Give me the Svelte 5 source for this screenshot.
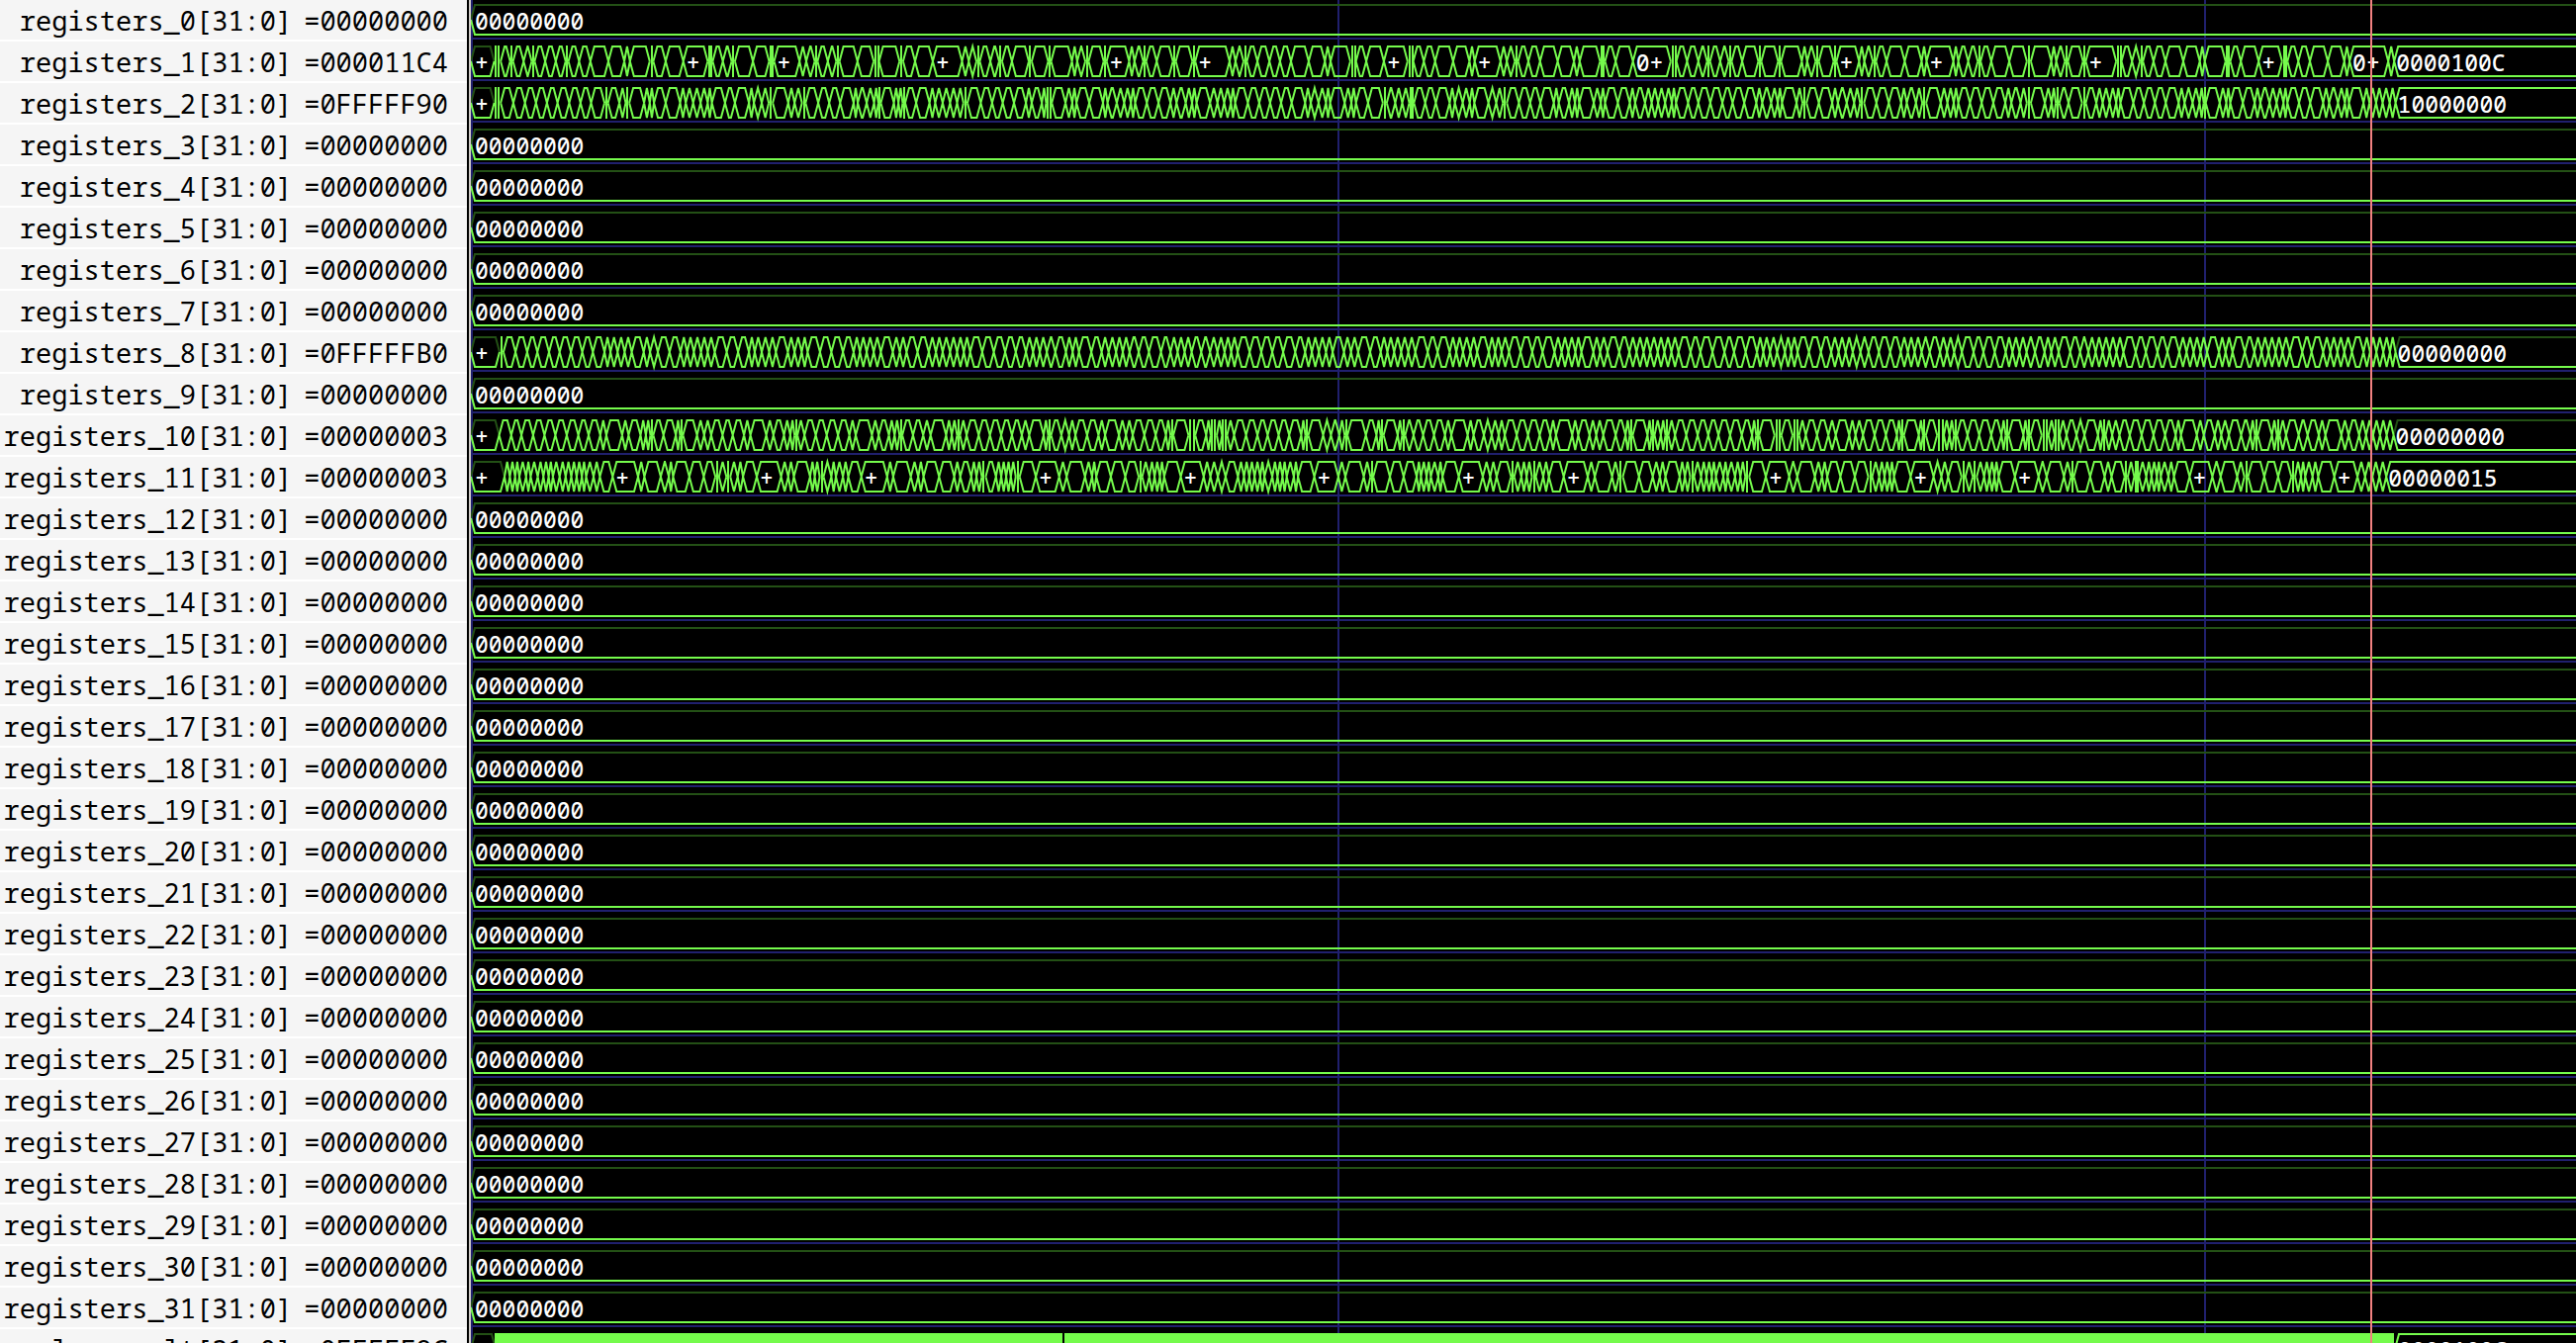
<script>
  const ORIGIN = 476;
  const TOP = 5;
  const MID = 20;
  const BOTTOM = 35;
  const FAR = 8000;

  // Each block: [start px, units per px, marks]. A positive mark is a value
  // change, a negative one is a pulse too short to draw as a cell.
  const A = 2.8;
  const B = 2.992;

  const traces = {
    1: {
      last: '0000100C',
      blocks: [
        [470, A, [-87, -97, 103, -132, 166, -193, 227, 257, -289, 323, 355, 406, 451, 467, 523, -529, 568, 618, -691, -697, 730, 755, -760, 815, 861, -865, -871, 947, 966, -994, 1027, 1051, -1056, 1111, 1157, -1162, -1168, 1230, 1240, 1274, 1324, 1407, 1426, 1448, -1453, 1487, 1512, -1516]],
        [1020, A, [8, -60, -115, 178, 193, 216, -221, -272, 340, 355, -384, 418, -468, -523, 624, 641, 664, -669, 703, 737, 767, 798, 848, 894, 910, 966, -972, -978, 1011, 1061, 1128, -1134, -1140, 1174, 1206, 1257, 1303, 1318, 1391, 1409, 1432, -1437, 1470, 1503]],
        [1570, A, [13, 59, 75, -137, -143, 177, 226, 333, -339, -345, 379, 411, -440, 473, -501, 535, -585, -641, 704, 719, 743, -748, -798, 866, 881, 905, -910, 944, 995, 1043, 1057, 1133, 1147, 1175, -1206, 1240, 1291, 1341, 1352, 1410, 1424]],
        [2080, B, [0, 22, -27, -81, 177, -183, -189, 225, 249, -254, 290, 326, 380, 430, 445, 508, -512, -518, 554, 608, 679, -685, -691, 728, 763, 817, 867, 883, 1000, 1018]]
      ]
    },
    2: {
      last: '10000000',
      blocks: [
        [470, A, [-87, -97, 103, 137, 170, 201, 232, 262, 295, 327, 357, 395, -401, 407, 437, 455, -461, 467, 507, 523, -531, 537, 568, 609, 625, 646, 667, 687, -695, 702, 736, 764, 804, 818, 840, 860, -867, 873, 915, 933, 954, -960, 966, 1000, 1031, 1062, 1100, 1112, 1137, 1158, -1166, 1177, 1214, 1227, -1235, 1246, 1277, 1315, 1331, 1352, 1373, 1393, 1411, -1418, 1426, 1460, 1492, 1522]],
        [1020, A, [14, 48, 64, 93, -101, 109, -117, 126, 160, 179, -187, 195, 227, 266, 279, 305, 326, 345, -353, 360, 390, 423, 457, 474, 500, 518, -527, 535, 569, 590, 609, 628, -636, 643, 676, 708, 739, 770, 800, 838, 854, 876, 897, -905, 912, 950, 969, -978, 985, 1016, 1058, 1069, 1093, 1113, 1133, -1142, 1148, 1178, 1208, 1247, 1262, 1284, 1304, -1313, 1321, 1357, 1379, 1398, -1405, 1413, 1443, 1475, 1504]],
        [1570, A, [2, 16, 45, 62, -70, 78, 115, 135, -143, 149, 183, 217, 232, 260, 279, 297, 317, 336, -344, 350, 382, 411, 445, 479, 508, 541, 575, 592, 617, 636, -644, 652, 689, 706, -713, 720, 752, 790, 806, 831, 852, 869, -876, 883, 915, 950, 985, 1001, 1027, 1045, -1052, 1060, 1097, 1116, 1134, -1143, 1149, 1180, 1213, 1246, 1280, 1297, 1323, 1341, -1348, 1356, 1392, 1411, -1419]],
        [2080, B, [-1, 33, 74, -81, 88, 117, 136, 157, 177, -186, 194, 229, 261, 294, 327, 366, 384, 408, 429, -438, 448, 490, 510, -518, 526, 560, 596, 613, 641, 662, 683, -691, 698, 730, 764, 803, 821, 848, 869, -877, 885, 925, 943, 963, 983, 1004, 1022]]
      ]
    },
    8: {
      last: '00000000',
      blocks: [
        [470, A, [98, 109, 143, 176, 205, 238, 268, 300, 332, 362, 395, 412, 432, 452, 472, 506, 524, 546, 579, 610, 629, 648, 668, 687, 707, 741, 773, 804, 820, 840, 861, 880, 914, 933, 953, 970, 1005, 1037, 1070, 1100, 1118, 1137, 1157, 1177, 1211, 1231, 1250, 1281, 1313, 1333, 1352, 1373, 1393, 1412, 1430, 1464, 1497, 1529]],
        [1020, A, [19, 48, 68, 87, 107, 131, 161, 180, 198, 233, 262, 282, 303, 322, 341, 367, 396, 430, 457, 477, 497, 517, 544, 569, 590, 610, 629, 647, 681, 714, 745, 776, 810, 838, 857, 877, 897, 916, 948, 968, 988, 1022, 1052, 1071, 1090, 1110, 1130, 1150, 1185, 1213, 1247, 1266, 1285, 1306, 1325, 1358, 1376, 1394, 1415, 1448, 1481, 1510]],
        [1570, A, [4, 24, 43, 63, 80, 114, 133, 154, 187, 216, 236, 256, 275, 296, 315, 335, 355, 389, 417, 451, 485, 512, 545, 577, 595, 614, 634, 656, 674, 692, 724, 758, 787, 808, 828, 848, 870, 893, 922, 954, 984, 1004, 1023, 1043, 1066, 1095, 1115, 1135, 1157, 1190, 1218, 1250, 1281, 1300, 1320, 1340, 1364, 1391, 1410]],
        [2080, B, [3, 38, 68, 93, 115, 136, 157, 178, 199, 236, 267, 302, 332, 368, 390, 411, 432, 452, 488, 508, 529, 566, 595, 617, 638, 659, 680, 702, 740, 768, 803, 825, 846, 867, 890, 925, 945, 964, 985, 1005, 1022]]
      ]
    },
    10: {
      last: '00000000',
      blocks: [
        [470, A, [97, 131, 160, 193, 225, 256, 288, 321, 350, 383, 400, 445, 463, 497, 512, -529, 562, 597, -613, 657, 677, 697, 729, 758, 790, 808, 853, 873, 903, 921, -937, 961, 993, 1024, 1056, 1088, 1106, 1152, 1171, 1200, 1216, -1234, 1268, 1297, 1318, 1362, 1378, -1397, 1420, 1454, 1486, 1518]],
        [1020, A, [8, 36, 57, 98, -115, 148, 170, 188, 221, 253, 272, 311, 331, 350, 383, 415, 444, -461, 508, -523, 558, -575, 588, 603, -613, 637, 671, 703, 732, 763, 793, 827, -843, 889, 911, 935, -954, 1010, 1040, -1056, 1100, -1117, 1145, 1172, 1203, 1234, 1252, 1298, 1315, 1344, 1366, 1386, 1403, 1437, 1469, 1502, 1532]],
        [1570, A, [8, 54, 71, 103, 122, 142, 177, 205, -221, 267, -283, 305, -322, 345, 377, 409, 439, 468, 501, 534, 563, -579, 627, -642, 678, -692, 715, 747, 779, 800, 838, 856, 877, 910, 942, 973, -989, 1035, -1051, 1087, -1102, 1122, -1139, 1173, 1206, 1240, 1269, -1285, 1331, -1347, 1383, -1398, 1420]],
        [2080, B, [-2, 27, 57, 81, 122, -141, 165, 187, 218, 254, 290, 325, 357, 373, 421, 442, 475, 495, 518, 555, 583, -601, 648, -667, 691, 729, 756, 790, 810, 858, 880, 912, 933, 954, 975, 995, 1016]]
      ]
    },
    11: {
      last: '00000015',
      blocks: [
        [470, A, [112, 127, 142, -150, 173, -182, 206, 222, 237, -245, 268, 285, 301, 316, 331, -339, 364, 382, 418, 490, 508, 554, 577, -585, 635, 676, 709, -715, 740, -747, 772, 787, 826, 895, 915, 931, 977, 990, 1004, -1011, 1037, -1046, 1070, 1085, 1122, 1195, 1212, 1262, 1283, 1298, 1342, 1385, 1402, 1433, 1448, 1463, -1470, 1503, 1518, 1532]],
        [1020, A, [5, 19, -26, 76, 142, 163, 215, 235, -243, 288, 329, 367, -373, 397, 412, 427, -435, 486, 551, 570, 591, 613, 648, 665, 680, 695, 711, -719, 745, 760, 774, -782, 806, -814, 864, 932, 952, 1004, -1027, 1078, 1117, 1154, -1162, 1182, -1190, 1215, -1223, 1273, 1341, 1362, 1380, 1421, -1426, 1450, 1465, 1480, -1487, 1512, 1528]],
        [1570, A, [30, 98, 118, 167, 186, -193, 243, 282, 302, 318, 358, 373, 388, -395, 419, 434, 449, -457, 482, -490, 515, 530, 544, -551, 602, 668, 691, 741, 761, 776, 813, 854, 892, -899, 923, 938, 953, -961, 1012, 1077, 1099, 1118, 1156, -1163, 1188, -1195, 1220, 1235, 1249, -1257, 1307, 1374, 1397, 1446, -1470, 1520]],
        [2080, B, [13, 26, -44, 99, 142, 163, 203, -208, 232, -242, 268, 284, 300, -308, 335, 352, 399, 468, 493, 543, 565, -572, 625, 667, 707, -714, 736, -745, 771, 788, 837, 907, 930, 952, 973, 994]]
      ]
    }
  };

  function edgesOf(blocks) {
    const gap = 5 / A;
    const edges = [];
    for (const [start, unit, marks] of blocks) {
      for (const mark of marks) {
        const spots = mark < 0 ? [-mark - 4, -mark + 4] : [mark];
        for (const spot of spots) {
          const x = start + spot / unit - ORIGIN;
          if (!edges.length || x - edges[edges.length - 1] > gap) edges.push(x);
        }
      }
    }
    return [0, ...edges];
  }

  const r = (n) => Math.round(n * 10) / 10;

  // Upper or lower outline of one bus cell, from crossing a to crossing b.
  function half(a, b, level) {
    const d = Math.min(4, (b - a) / 2);
    return `M${r(a)} ${MID}L${r(a + d)} ${level}H${r(b - d)}L${r(b)} ${MID}`;
  }

  function bus(trace) {
    const edges = edgesOf(trace.blocks);
    let bright = half(0, edges[1], BOTTOM);
    let dim = half(0, edges[1], TOP);
    const labels = [{ x: 4, text: '+' }];
    for (let i = 1; i < edges.length; i++) {
      const a = edges[i];
      const final = i === edges.length - 1;
      const b = final ? FAR : edges[i + 1];
      if (b - a < 4) {
        bright += `M${Math.round((a + b) / 2)} ${TOP - 1}V${BOTTOM + 1}`;
        continue;
      }
      bright += half(a, b, BOTTOM);
      if (final && trace.last === '00000000') dim += half(a, b, TOP);
      else bright += half(a, b, TOP);
      if (final) labels.push({ x: r(a + 2), text: trace.last });
      else if (b - a > 37) labels.push({ x: r(a + 3), text: '0+' });
      else if (b - a > 22) labels.push({ x: r(a + 3), text: '+' });
    }
    return { bright, dim, labels };
  }

  const idle = {
    bright: half(0, FAR, BOTTOM),
    dim: half(0, FAR, TOP),
    labels: [{ x: 4, text: '00000000' }]
  };

  const values = { 1: '000011C4', 2: '0FFFFF90', 8: '0FFFFFB0', 10: '00000003', 11: '00000003' };

  const signals = Array.from({ length: 32 }, (_, i) => ({
    name: `registers_${i}[31:0]`,
    value: values[i] ?? '00000000',
    wave: traces[i] ? bus(traces[i]) : idle
  }));

  signals.push({
    name: 'io_alu_result[31:0]',
    value: '0FFFFF9C',
    wave: {
      bright: half(0, 25, BOTTOM) + half(1945, FAR, TOP) + half(1945, FAR, BOTTOM),
      dim: half(0, 25, TOP),
      solid: [[24, 598], [600, 1944]],
      labels: [{ x: 1948, text: '0000100C' }]
    }
  });
</script>

<main class="viewer">
  <ul class="names">
    {#each signals as signal}
      <li class="name-row">
        <span>{signal.name}</span>
        <span>={signal.value}</span>
      </li>
    {/each}
  </ul>
  <section class="waves" aria-label="Waveforms">
    {#each signals as signal}
      <svg class="wave" role="img" aria-label={signal.name}>
        <path class="dim" d={signal.wave.dim} />
        <path class="bright" d={signal.wave.bright} />
        {#each signal.wave.solid ?? [] as [a, b]}
          <rect class="solid" x={a} y="4" width={b - a} height="32" />
        {/each}
        {#each signal.wave.labels as label}
          <text x={label.x} y="30">{label.text}</text>
        {/each}
      </svg>
    {/each}
    <i class="grid-line first"></i>
    <i class="grid-line second"></i>
    <i class="marker"></i>
  </section>
</main>

<style>
  :global(body) {
    margin: 0;
    overflow: hidden;
    background: #000;
  }
  .viewer {
    display: flex;
    height: 100vh;
    overflow: hidden;
    font-family: 'Noto Sans Mono', 'Roboto Mono', 'DejaVu Sans Mono', monospace;
  }
  .names {
    flex: 0 0 472px;
    margin: 0;
    padding: 0;
    list-style: none;
    overflow: hidden;
    background: #f5f5f5;
  }
  .name-row {
    display: flex;
    justify-content: flex-end;
    gap: 12px;
    box-sizing: border-box;
    height: 42px;
    padding-right: 19px;
    border-bottom: 2px solid #fff;
    font-size: 27px;
    line-height: 42px;
    white-space: pre;
    color: #000;
  }
  .waves {
    position: relative;
    isolation: isolate;
    flex: 1;
    min-width: 0;
    margin-left: 2px;
    border-left: 2px solid #cfcbc6;
    background: #000;
    box-shadow: inset 2px 0 #20206e;
  }
  .wave {
    display: block;
    box-sizing: border-box;
    width: 100%;
    height: 42px;
    background: linear-gradient(#20206e, #20206e) 0 38px / 100% 2px no-repeat;
  }
  path {
    fill: none;
    stroke-width: 2;
  }
  .dim {
    stroke: #235015;
  }
  .bright {
    stroke: #75fb4c;
  }
  .solid {
    fill: #75fb4c;
  }
  text {
    fill: #fff;
    font-size: 23px;
    font-weight: 500;
  }
  .grid-line,
  .marker {
    position: absolute;
    top: 0;
    bottom: 0;
    width: 2px;
  }
  .grid-line {
    z-index: -1;
    background: #20206e;
  }
  .first {
    left: 876px;
  }
  .second {
    left: 1752px;
  }
  .marker {
    left: 1920px;
    background: #f08080;
  }
</style>
